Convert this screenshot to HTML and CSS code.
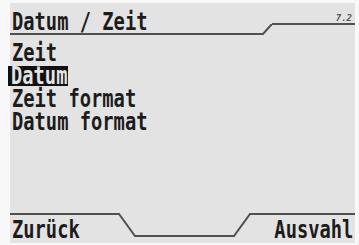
FILE: index.html
```html
<!DOCTYPE html>
<html lang="de">
<head>
    <meta charset="UTF-8">
    <meta name="viewport" content="width=device-width, initial-scale=1.0">
    <title>Datum / Zeit</title>
    <link rel="stylesheet" href="styles.css">
</head>
<body>
    <div class="lcd">
        <!-- Kopfzeile mit Titel und Seitennummer -->
        <div class="head">
            <div class="head-title"><span class="txt">Datum / Zeit</span></div>
            <svg class="slant" width="10" height="32" viewBox="0 0 10 32">
                <polyline points="0,31 1,31 9,22 10,22" />
            </svg>
            <div class="head-page">7.2</div>
        </div>

        <ul class="menu">
            <li><span class="txt">Zeit</span></li>
            <li class="sel"><span class="txt">Datum</span></li>
            <li><span class="txt">Zeit format</span></li>
            <li><span class="txt">Datum format</span></li>
        </ul>

        <!-- Softkeys -->
        <div class="foot">
            <div class="key key-left"><span class="txt">Zurück</span></div>
            <svg class="slant" width="20" height="24" viewBox="0 0 20 24">
                <polyline points="0,1 2,1 18,23 20,23" />
            </svg>
            <div class="key-gap"></div>
            <svg class="slant" width="20" height="24" viewBox="0 0 20 24">
                <polyline points="0,23 2,23 18,1 20,1" />
            </svg>
            <div class="key key-right"><span class="txt txt-right">Ausvahl</span></div>
        </div>
    </div>
</body>
</html>
```

FILE: styles.css
```css
/* Rahmen um das Display */
body {
    margin: 0;
    padding: 3px 4px 2px 10px;
    background-color: #f8f8f8;
    font-family: "DejaVu Sans Mono", "Liberation Mono", monospace;
    font-weight: bold;
    font-size: 25px;
    color: #1c1c1c;
}

/* Displayfläche */
.lcd {
    width: 345px;
    height: 240px;
    background-color: #e3e3e3;
    display: flex;
    flex-direction: column;
}

/* schmale LCD-Schrift */
.txt {
    display: inline-block;
    white-space: pre;
    transform: scaleX(0.75);
    transform-origin: left center;
}

.txt-right {
    transform-origin: right center;
}

.slant {
    flex: none;
    display: block;
}

.slant polyline {
    fill: none;
    stroke: #505050;
    stroke-width: 2;
}

/* Kopfzeile */
.head {
    display: flex;
    align-items: flex-start;
    height: 32px;
    flex: none;
}

.head-title {
    width: 250px;
    padding: 8px 0 0 2px;
    height: 22px;
    line-height: 22px;
    border-bottom: 2px solid #505050;
}

.head-page {
    width: 80px;
    height: 20px;
    padding-right: 3px;
    border-bottom: 2px solid #505050;
    font-size: 9px;
    font-style: italic;
    line-height: 9px;
    color: #555;
    display: flex;
    align-items: flex-end;
    justify-content: flex-end;
}

/* Menü */
.menu {
    list-style: none;
    margin: 0;
    padding: 6px 0 0 2px;
    flex: 1;
    line-height: 23px;
}

.menu li {
    height: 23px;
}

.sel .txt {
    line-height: 20px;
    background-color: #111;
    color: #e3e3e3;
    padding: 0 1px 0 4px;
    margin-left: -4px;
}

/* Fußzeile */
.foot {
    display: flex;
    align-items: flex-start;
    height: 30px;
    flex: none;
}

.key {
    border-top: 2px solid #505050;
    padding-top: 3px;
    line-height: 23px;
    height: 25px;
}

.key-left {
    width: 105px;
    padding-left: 2px;
}

.key-gap {
    width: 95px;
    height: 22px;
    border-bottom: 2px solid #505050;
}

.key-right {
    width: 101px;
    padding-right: 2px;
    display: flex;
    justify-content: flex-end;
}
```
